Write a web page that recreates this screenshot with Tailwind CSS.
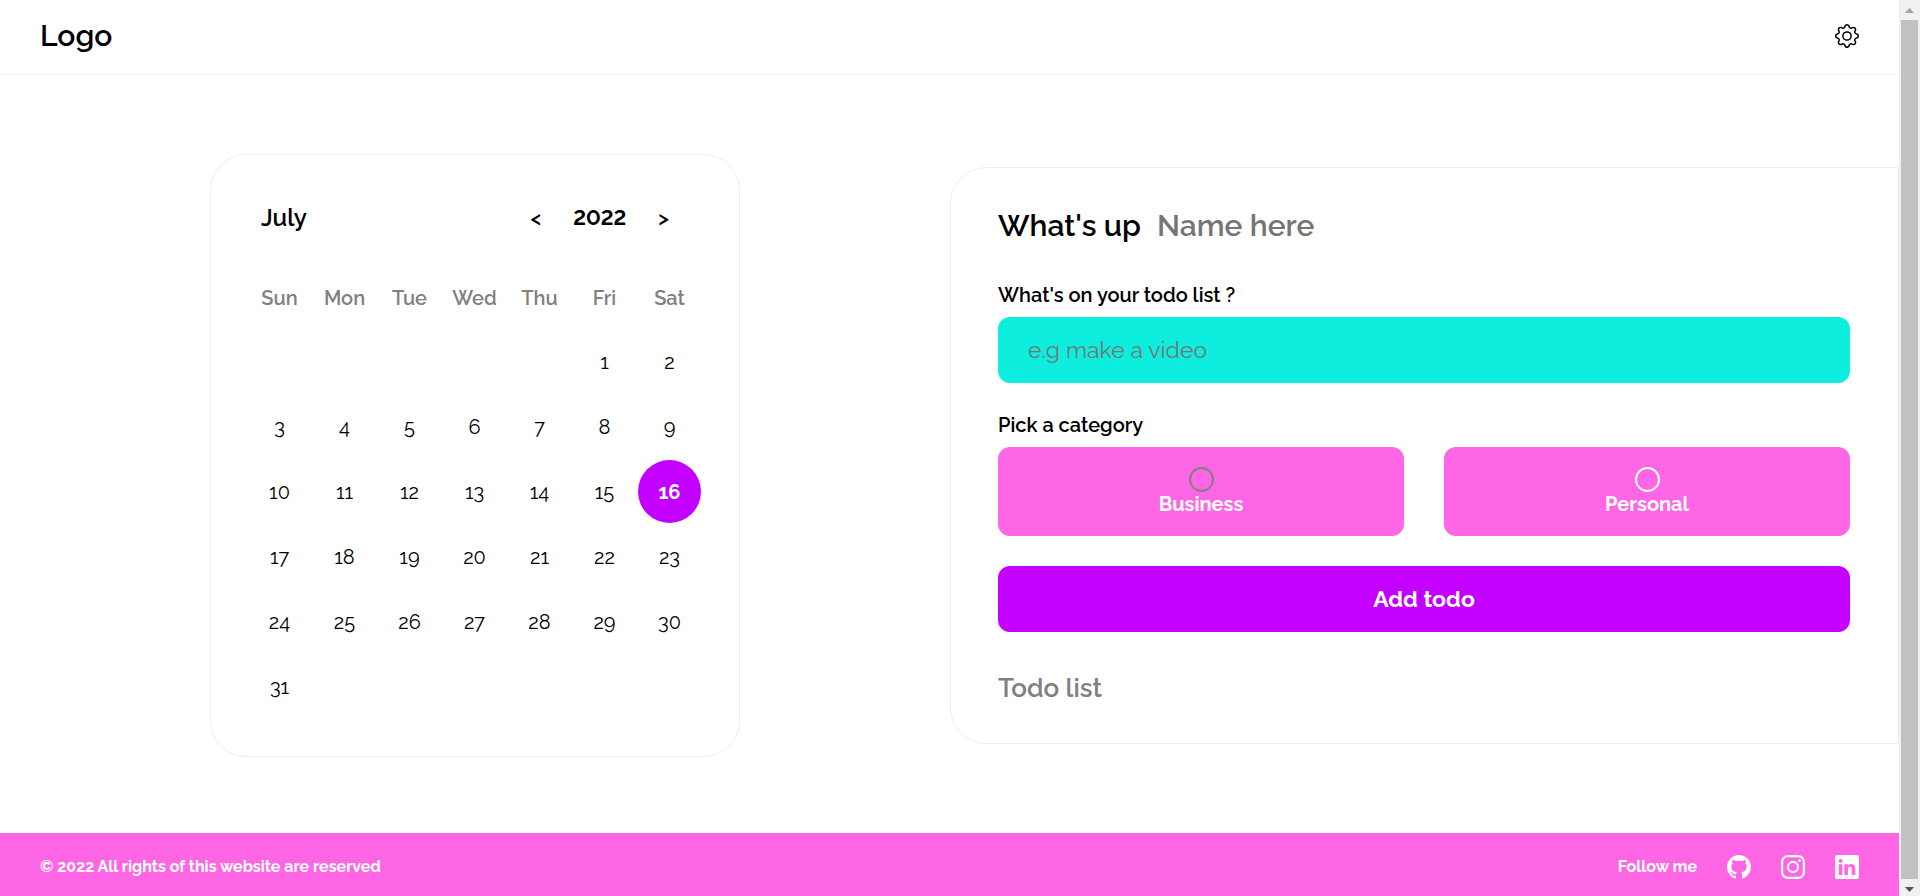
<!DOCTYPE html>
<html lang="en">
<head>
<meta charset="utf-8">
<meta name="viewport" content="width=device-width, initial-scale=1">
<title>Todo</title>
<script src="https://cdn.jsdelivr.net/npm/@tailwindcss/browser@4"></script>
</head>
<body class="flex h-screen overflow-hidden bg-white font-['Raleway','Lato',sans-serif] text-black">
<div class="flex min-w-0 flex-1 flex-col">
  <header class="flex h-[75px] shrink-0 items-center justify-between border-b border-[#eeeeee] px-10 pb-[2px]">
    <a href="#" class="text-[30px] leading-9 font-semibold">Logo</a>
    <button type="button" aria-label="Settings">
      <svg class="size-6" viewBox="0 0 16 16" fill="currentColor" aria-hidden="true"><path d="M8 4.754a3.246 3.246 0 1 0 0 6.492 3.246 3.246 0 0 0 0-6.492zM5.754 8a2.246 2.246 0 1 1 4.492 0 2.246 2.246 0 0 1-4.492 0z"/><path d="M9.796 1.343c-.527-1.79-3.065-1.79-3.592 0l-.094.319a.873.873 0 0 1-1.255.52l-.292-.16c-1.64-.892-3.433.902-2.54 2.541l.159.292a.873.873 0 0 1-.52 1.255l-.319.094c-1.79.527-1.79 3.065 0 3.592l.319.094a.873.873 0 0 1 .52 1.255l-.16.292c-.892 1.64.901 3.434 2.541 2.54l.292-.159a.873.873 0 0 1 1.255.52l.094.319c.527 1.79 3.065 1.79 3.592 0l.094-.319a.873.873 0 0 1 1.255-.52l.292.16c1.64.893 3.434-.902 2.54-2.541l-.159-.292a.873.873 0 0 1 .52-1.255l.319-.094c1.79-.527 1.79-3.065 0-3.592l-.319-.094a.873.873 0 0 1-.52-1.255l.16-.292c.893-1.64-.902-3.433-2.541-2.54l-.292.159a.873.873 0 0 1-1.255-.52l-.094-.319zm-2.633.283c.246-.835 1.428-.835 1.674 0l.094.319a1.873 1.873 0 0 0 2.693 1.115l.291-.16c.764-.415 1.6.42 1.184 1.185l-.159.292a1.873 1.873 0 0 0 1.116 2.692l.318.094c.835.246.835 1.428 0 1.674l-.319.094a1.873 1.873 0 0 0-1.115 2.693l.16.291c.415.764-.42 1.6-1.185 1.184l-.291-.159a1.873 1.873 0 0 0-2.693 1.116l-.094.318c-.246.835-1.428.835-1.674 0l-.094-.319a1.873 1.873 0 0 0-2.692-1.115l-.292.16c-.764.415-1.6-.42-1.184-1.185l.159-.291A1.873 1.873 0 0 0 1.945 8.93l-.319-.094c-.835-.246-.835-1.428 0-1.674l.319-.094A1.873 1.873 0 0 0 3.06 4.377l-.16-.292c-.415-.764.42-1.6 1.185-1.184l.292.159a1.873 1.873 0 0 0 2.692-1.115l.094-.319z"/></svg>
    </button>
  </header>

  <main class="flex shrink-0 items-center gap-[210px] pt-[79px] pb-[76px] pl-[210px]">
    <section class="w-[530px] shrink-0 rounded-[36px] border border-[#eeeeee] pt-[43px] pr-9 pb-[36px] pl-[35px]" aria-label="Calendar">
      <div class="flex h-10 items-center justify-between pr-[34px] pl-[15px]">
        <h2 class="text-2xl font-semibold">July</h2>
        <div class="flex items-center gap-8 text-[21px] font-bold lining-nums">
          <button type="button" aria-label="Previous year" class="font-semibold">&lt;</button>
          <span>2022</span>
          <button type="button" aria-label="Next year" class="font-semibold">&gt;</button>
        </div>
      </div>
      <table class="mt-7 w-full table-fixed border-separate border-spacing-[2px] text-center text-xl">
        <thead>
          <tr class="h-[60px] text-[#808080]">
            <th scope="col" class="font-semibold">Sun</th><th scope="col" class="font-semibold">Mon</th><th scope="col" class="font-semibold">Tue</th><th scope="col" class="font-semibold">Wed</th><th scope="col" class="font-semibold">Thu</th><th scope="col" class="font-semibold">Fri</th><th scope="col" class="font-semibold">Sat</th>
          </tr>
        </thead>
        <tbody>
          <tr class="h-[63px]"><td></td><td></td><td></td><td></td><td></td><td>1</td><td>2</td></tr>
          <tr class="h-[63px]"><td>3</td><td>4</td><td>5</td><td>6</td><td>7</td><td>8</td><td>9</td></tr>
          <tr class="h-[63px]"><td>10</td><td>11</td><td>12</td><td>13</td><td>14</td><td>15</td><td class="rounded-full bg-[#c300ff] font-bold text-white">16</td></tr>
          <tr class="h-[63px]"><td>17</td><td>18</td><td>19</td><td>20</td><td>21</td><td>22</td><td>23</td></tr>
          <tr class="h-[63px]"><td>24</td><td>25</td><td>26</td><td>27</td><td>28</td><td>29</td><td>30</td></tr>
          <tr class="h-[63px]"><td>31</td><td></td><td></td><td></td><td></td><td></td><td></td></tr>
        </tbody>
      </table>
    </section>

    <section class="min-w-0 flex-1 rounded-l-[36px] border border-[#eeeeee] pt-[39px] pr-12 pb-[39px] pl-[47px]" aria-label="Todo">
      <form>
        <div class="flex items-center gap-4 text-[30px] leading-[38px] font-semibold">
          <label for="name" class="shrink-0">What's up</label>
          <input id="name" type="text" placeholder="Name here" class="h-[38px] min-w-0 flex-1 outline-none placeholder:text-[#757575]">
        </div>
        <label for="todo" class="mt-[38px] block text-xl leading-6 font-semibold">What's on your todo list ?</label>
        <input id="todo" type="text" placeholder="e.g make a video" class="mt-[10px] block h-[66px] w-full rounded-xl bg-[#0deedf] px-[30px] pb-[2px] text-[23px] outline-none placeholder:text-[#757575]">
        <fieldset class="mt-[30px]">
          <legend class="text-xl leading-6 font-semibold">Pick a category</legend>
          <div class="mt-[10px] grid grid-cols-2 gap-10 text-xl leading-6 font-bold text-white">
            <label class="flex h-[89px] flex-col items-center rounded-xl bg-[#ff66e5] pt-5">
              <input type="radio" name="category" class="size-[25px] appearance-none rounded-full border-2 border-[#808080]">
              <span>Business</span>
            </label>
            <label class="flex h-[89px] flex-col items-center rounded-xl bg-[#ff66e5] pt-5">
              <input type="radio" name="category" class="size-[25px] appearance-none rounded-full border-2 border-white">
              <span>Personal</span>
            </label>
          </div>
        </fieldset>
        <button type="button" class="mt-[30px] block h-[66px] w-full rounded-xl bg-[#c300ff] text-[23px] font-bold text-white">Add todo</button>
      </form>
      <h2 class="mt-10 text-[26px] leading-8 font-semibold text-[#808080]">Todo list</h2>
    </section>
  </main>

  <footer class="flex shrink-0 items-center justify-between bg-[#ff66e5] px-10 py-[22px] text-base leading-6 font-bold text-white">
    <p>© 2022 All rights of this website are reserved</p>
    <div class="flex items-center gap-[30px]">
      <span>Follow me</span>
      <a href="#" aria-label="GitHub"><svg class="size-6" viewBox="0 0 16 16" fill="currentColor" aria-hidden="true"><path d="M8 0C3.58 0 0 3.58 0 8c0 3.54 2.29 6.53 5.47 7.59.4.07.55-.17.55-.38 0-.19-.01-.82-.01-1.49-2.01.37-2.53-.49-2.69-.94-.09-.23-.48-.94-.82-1.13-.28-.15-.68-.52-.01-.53.63-.01 1.08.58 1.23.82.72 1.21 1.87.87 2.33.66.07-.52.28-.87.51-1.07-1.78-.2-3.64-.89-3.64-3.95 0-.87.31-1.59.82-2.15-.08-.2-.36-1.02.08-2.12 0 0 .67-.21 2.2.82.64-.18 1.32-.27 2-.27.68 0 1.36.09 2 .27 1.53-1.04 2.2-.82 2.2-.82.44 1.1.16 1.92.08 2.12.51.56.82 1.27.82 2.15 0 3.07-1.87 3.75-3.65 3.95.29.25.54.73.54 1.48 0 1.07-.01 1.93-.01 2.2 0 .21.15.46.55.38A8.012 8.012 0 0 0 16 8c0-4.42-3.58-8-8-8z"/></svg></a>
      <a href="#" aria-label="Instagram"><svg class="size-6" viewBox="0 0 16 16" fill="none" stroke="currentColor" stroke-width="1.44" aria-hidden="true"><rect x=".72" y=".72" width="14.56" height="14.56" rx="3.9"/><circle cx="8" cy="8" r="3.39"/><circle cx="12.27" cy="3.73" r=".96" fill="currentColor" stroke="none"/></svg></a>
      <a href="#" aria-label="LinkedIn"><svg class="size-6" viewBox="0 0 16 16" fill="currentColor" aria-hidden="true"><path d="M0 1.146C0 .513.526 0 1.175 0h13.65C15.474 0 16 .513 16 1.146v13.708c0 .633-.526 1.146-1.175 1.146H1.175C.526 16 0 15.487 0 14.854V1.146zm4.943 12.248V6.169H2.542v7.225h2.401zm-1.2-8.212c.837 0 1.358-.554 1.358-1.248-.015-.709-.52-1.248-1.342-1.248-.822 0-1.359.54-1.359 1.248 0 .694.521 1.248 1.327 1.248h.016zm4.908 8.212V9.359c0-.216.016-.432.08-.586.173-.431.568-.878 1.232-.878.869 0 1.216.662 1.216 1.634v3.865h2.401V9.25c0-2.22-1.184-3.252-2.764-3.252-1.274 0-1.845.7-2.165 1.193v.025h-.016a5.54 5.54 0 0 1 .016-.025V6.169h-2.4c.03.678 0 7.225 0 7.225h2.4z"/></svg></a>
    </div>
  </footer>
</div>

<!-- Scroll track with arrow caps -->
<div class="flex w-[21px] shrink-0 flex-col bg-[#f1f1f1] px-[2px]" aria-hidden="true">
  <svg class="h-5 w-[17px] shrink-0" viewBox="0 0 17 20" fill="#a3a3a3"><path d="M4 13h9L8.500 8z"/></svg>
  <div class="flex-1 bg-[#c1c1c1]"></div>
  <svg class="h-[17px] w-[17px] shrink-0" viewBox="0 0 17 17" fill="#505050"><path d="M4 8h9l-4.500 5z"/></svg>
</div>
</body>
</html>
